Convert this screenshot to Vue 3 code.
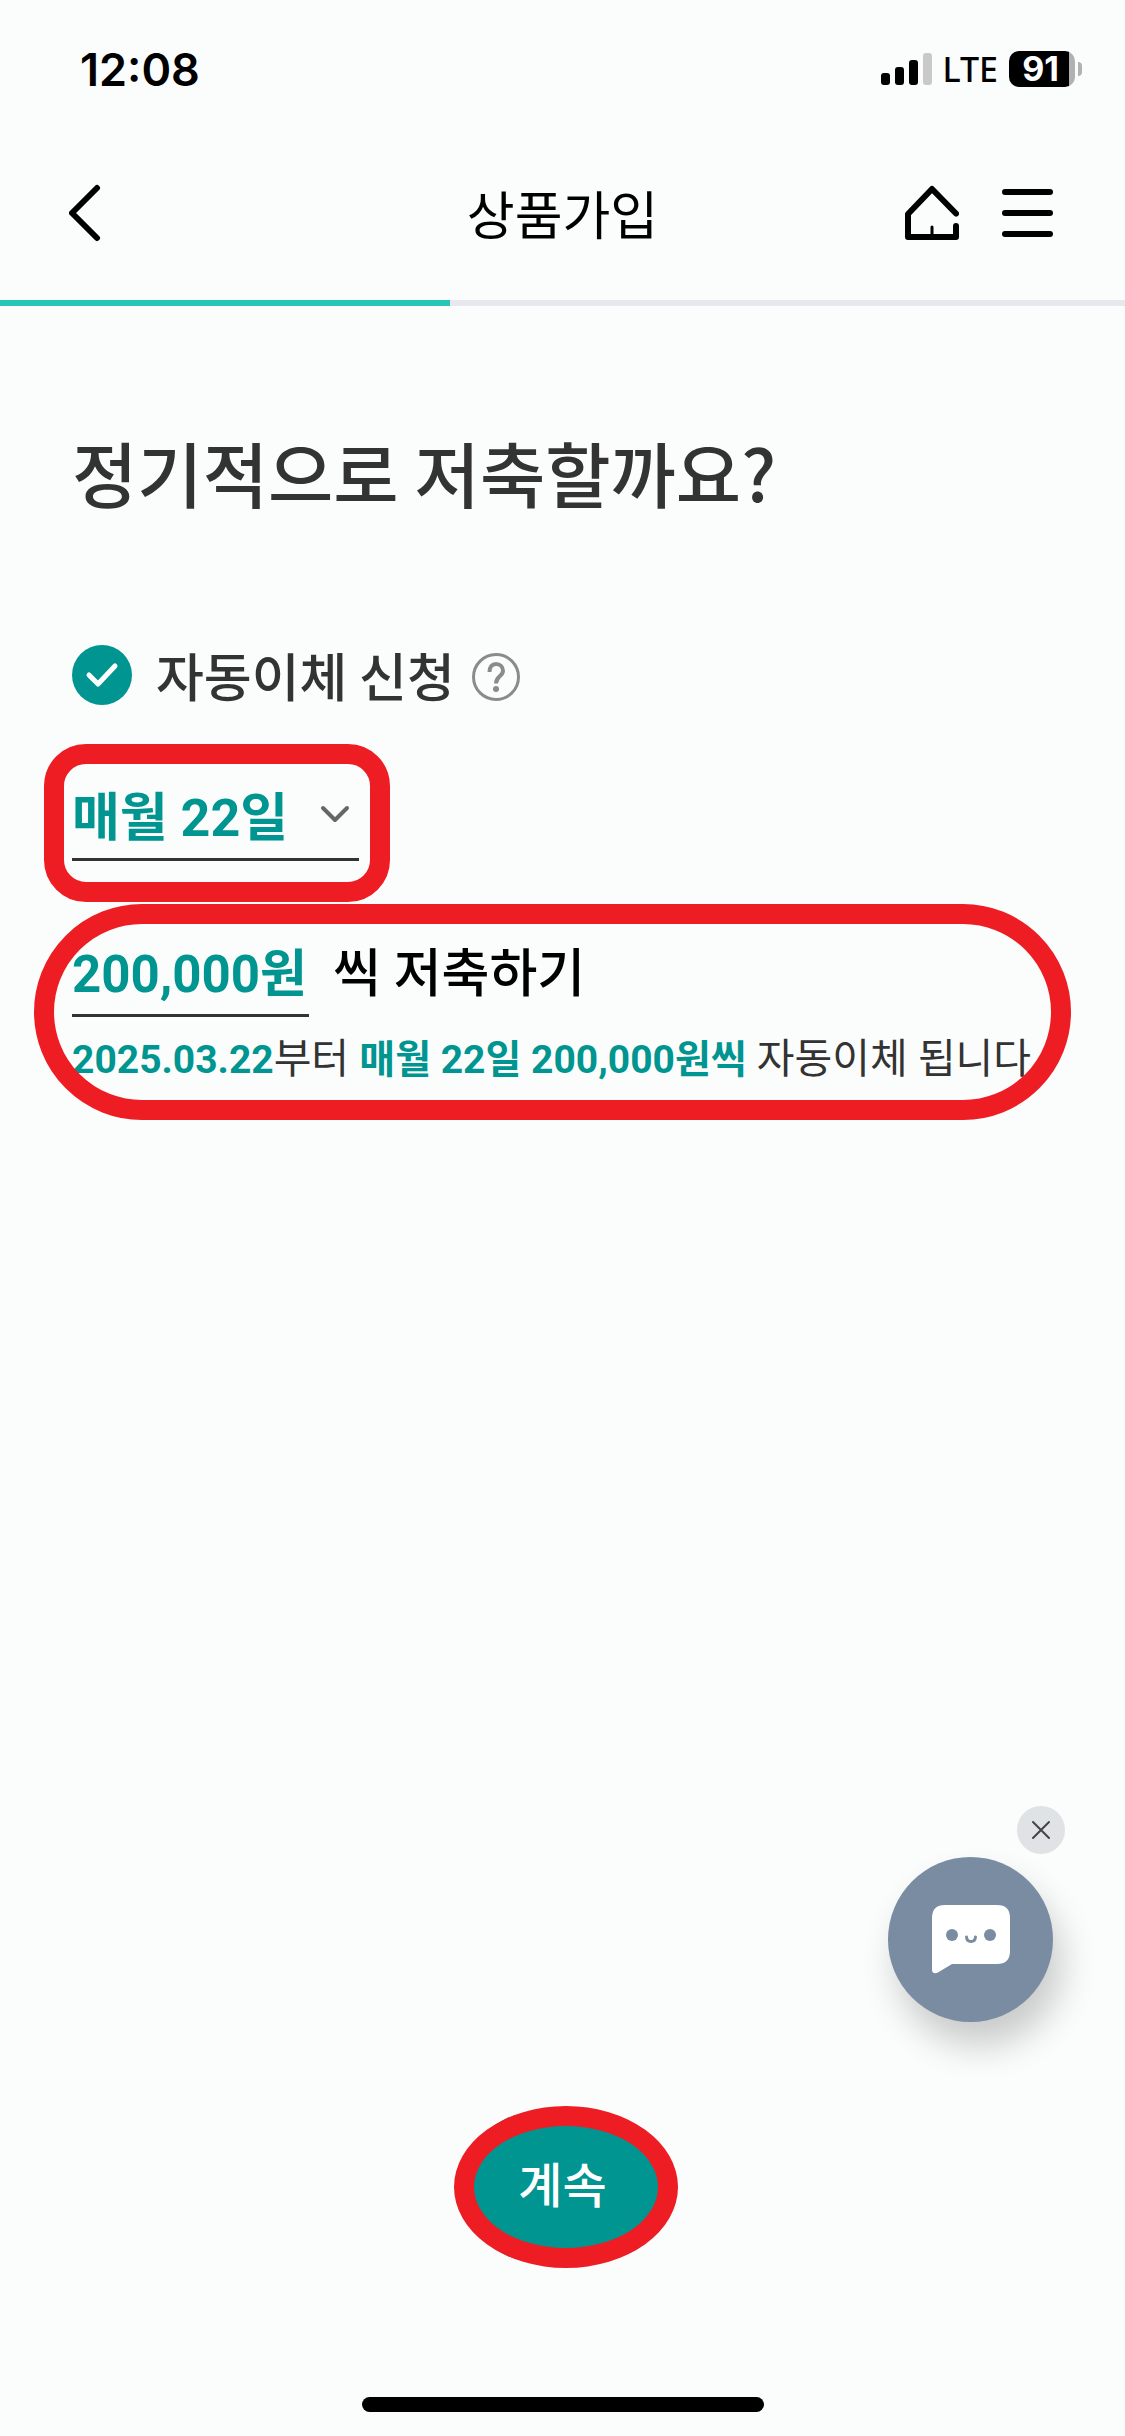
<script setup>
import { ref } from 'vue'

const autoTransfer = ref(true)
const day = ref('매월 22일')
const amount = ref('200,000원')
const chatOpen = ref(true)
const progress = 40
</script>

<template>
  <div class="screen">
    <div class="status">
      <span class="clock">12:08</span>
      <div class="indicators">
        <svg class="signal" width="51" height="32" viewBox="0 0 51 32" aria-hidden="true">
          <rect x="0" y="20" width="9" height="12" rx="3" />
          <rect x="14" y="14" width="9" height="18" rx="3" />
          <rect x="28" y="7" width="9" height="25" rx="3" />
          <rect x="42" y="0" width="9" height="32" rx="3" fill="#c9c9c9" />
        </svg>
        <span class="network">LTE</span>
        <div class="battery"><span class="level">91</span></div>
        <i class="battery-tip"></i>
      </div>
    </div>

    <header class="topbar">
      <button class="icon-btn back" aria-label="뒤로">
        <svg width="33" height="60" viewBox="3 0 33 60" fill="none" stroke="#000" stroke-width="6" stroke-linecap="round" stroke-linejoin="round">
          <path d="M31 5 6 30 31 55" />
        </svg>
      </button>
      <h2 class="page-name">상품가입</h2>
      <nav class="actions">
        <button class="icon-btn" aria-label="홈">
          <svg width="54" height="60" viewBox="0 0 54 60" fill="none" stroke="#000" stroke-width="6" stroke-linecap="round" stroke-linejoin="round">
            <path d="M51 30.500 27 6 3 31V54H51V43" />
            <path d="M27 44V52" stroke-width="3" />
          </svg>
        </button>
        <button class="icon-btn" aria-label="메뉴">
          <svg width="54" height="60" viewBox="0 0 54 60" fill="none" stroke="#000" stroke-width="6" stroke-linecap="round">
            <path d="M3 9H48M3 30H48M3 51H48" />
          </svg>
        </button>
      </nav>
    </header>
    <div class="progress"><div class="progress-fill" :style="{ width: progress + '%' }"></div></div>

    <main class="content">
      <h1>정기적으로 저축할까요?</h1>

      <div class="consent">
        <label class="check">
          <span class="tick">
            <input v-model="autoTransfer" type="checkbox" />
            <svg width="60" height="60" viewBox="0 0 60 60" fill="none" stroke="#fff" stroke-width="5" stroke-linecap="round" stroke-linejoin="round" aria-hidden="true">
              <path d="M17 30 26 39 43 21" />
            </svg>
          </span>
          자동이체 신청
        </label>
        <button class="help" aria-label="도움말">
          <svg width="48" height="48" viewBox="0 0 48 48" fill="none" stroke="#8b8b8b" stroke-width="3">
            <circle cx="24" cy="24" r="22.500" />
            <path d="M17.500 19C17.500 14 20 11 24 11S31 14 31 18C31 23 24 23.500 24 30.500" stroke-width="4" />
            <circle cx="24" cy="36" r="3" fill="#8b8b8b" stroke="none" />
          </svg>
        </button>
      </div>

      <div class="marked date">
        <label class="select">
          <select v-model="day" aria-label="이체일">
            <option>매월 22일</option>
          </select>
          <svg width="30" height="20" viewBox="0 0 30 20" fill="none" stroke="#666" stroke-width="4" stroke-linecap="round" stroke-linejoin="round" aria-hidden="true">
            <path d="M3 3 15 15 27 3" />
          </svg>
        </label>
      </div>

      <div class="marked plan">
        <div class="amount-row">
          <input id="amount" v-model="amount" class="amount" type="text" />
          <label for="amount">씩 저축하기</label>
        </div>
        <p class="summary"><b>2025.03.22</b>부터 <b>매월 22일 200,000원씩</b> 자동이체 됩니다</p>
      </div>
    </main>

    <div v-if="chatOpen" class="chat">
      <button class="chat-close" aria-label="닫기" @click="chatOpen = false">
        <svg width="20" height="20" viewBox="0 0 20 20" stroke="#444" stroke-width="2" stroke-linecap="round">
          <path d="M2 2 18 18M18 2 2 18" />
        </svg>
      </button>
      <button class="chat-open" aria-label="챗봇 상담">
        <svg width="78" height="70" viewBox="0 0 78 70">
          <path fill="#fff" d="M13 0H65Q78 0 78 13V46Q78 59 65 59H20L5.500 67.800Q0 69.500 0 64.500V13Q0 0 13 0Z" />
          <circle cx="20" cy="30" r="6" fill="#798ca1" />
          <circle cx="58" cy="30" r="6" fill="#798ca1" />
          <path d="M34.500 32C35 38 43 38 43.500 32" fill="none" stroke="#798ca1" stroke-width="3" stroke-linecap="round" />
        </svg>
      </button>
    </div>

    <footer class="footer">
      <button class="next">계속</button>
    </footer>
    <div class="home-indicator"></div>
  </div>
</template>

<style>
body {
  margin: 0;
  background: #fbfdfc;
}
</style>

<style scoped>
.screen {
  display: flex;
  flex-direction: column;
  min-height: 100vh;
  box-sizing: border-box;
  padding-bottom: 24px;
  background: #fbfdfc;
  color: #333;
  font-family: Roboto, "Noto Sans CJK KR", sans-serif;
}
button {
  display: flex;
  align-items: center;
  justify-content: center;
  padding: 0;
  border: 0;
  background: none;
  font: inherit;
  cursor: pointer;
}
svg {
  display: block;
}

.status {
  display: flex;
  align-items: center;
  justify-content: space-between;
  height: 138px;
  padding: 0 43px 0 80px;
  color: #000;
  font-family: Inter, "Liberation Sans", sans-serif;
}
.clock {
  font-size: 45px;
  font-weight: 600;
}
.indicators {
  display: flex;
  align-items: center;
}
.network {
  margin: 0 11px 0 10px;
  font-family: "Noto Sans", sans-serif;
  font-size: 34px;
  font-weight: 500;
  line-height: 36px;
}
.battery {
  display: flex;
  align-items: center;
  width: 66px;
  height: 36px;
  border-radius: 10px;
  background: linear-gradient(to right, #000 60px, #b1b1b1 60px);
}
.level {
  width: 63px;
  color: #fff;
  font-size: 34px;
  font-weight: 700;
  line-height: 36px;
  text-align: center;
}
.battery-tip {
  width: 4px;
  height: 14px;
  margin-left: 3px;
  border-radius: 0 8px 8px 0;
  background: #b1b1b1;
}

.topbar {
  display: grid;
  grid-template-columns: 1fr auto 1fr;
  align-items: center;
  height: 162px;
  box-sizing: border-box;
  padding: 0 69px 12px;
}
.back {
  justify-self: start;
}
.page-name {
  margin: 0;
  color: #000;
  font-family: "Noto Sans CJK KR", sans-serif;
  font-size: 52px;
  font-weight: 400;
  line-height: 72px;
}
.actions {
  display: flex;
  justify-content: flex-end;
  gap: 43px;
}
.progress {
  height: 6px;
  background: #e7e7ed;
}
.progress-fill {
  height: 100%;
  background: #26c6b7;
}

.content {
  padding: 115px 54px 0 72px;
}
h1 {
  margin: 0;
  font-family: "Noto Sans CJK KR", sans-serif;
  font-size: 71px;
  font-weight: 500;
  line-height: 100px;
}
.consent {
  display: flex;
  align-items: center;
  margin-top: 118px;
}
.check {
  display: flex;
  align-items: center;
  gap: 24px;
  font-family: "Noto Sans CJK KR", sans-serif;
  font-size: 52px;
  font-weight: 500;
  line-height: 72px;
}
.tick {
  display: grid;
}
.tick > * {
  grid-area: 1 / 1;
}
.tick input {
  width: 60px;
  height: 60px;
  margin: 0;
  appearance: none;
  border-radius: 50%;
  background: #c9cdd2;
}
.tick input:checked {
  background: #009590;
}
.tick svg {
  pointer-events: none;
}
.help {
  margin: 4px 0 0 17px;
}

/* red highlight rings around the fields */
.marked {
  position: relative;
}
.marked::after {
  content: "";
  position: absolute;
  border: 20px solid #ee1d24;
  pointer-events: none;
}
.date {
  width: 287px;
  margin-top: 66px;
}
.date::after {
  inset: -33px -31px -41px -28px;
  border-radius: 42px;
}
.select {
  display: grid;
  align-items: center;
}
.select > * {
  grid-area: 1 / 1;
}
.select svg {
  justify-self: end;
  margin: 0 9px 8px 0;
  pointer-events: none;
}
select,
.amount {
  box-sizing: border-box;
  width: 100%;
  height: 84px;
  margin: 0;
  padding: 2px 0 0;
  border: 0;
  border-bottom: 3px solid #333;
  border-radius: 0;
  outline: 0;
  appearance: none;
  background: none;
  color: #009590;
  font-family: inherit;
  font-size: 52px;
  font-weight: 700;
}
.plan {
  margin-top: 72px;
}
.plan::after {
  inset: -29px 0 -20px -38px;
  border-radius: 108px;
}
.amount-row {
  display: flex;
  align-items: center;
  gap: 24px;
  color: #000;
  font-size: 52px;
  font-weight: 500;
  line-height: 72px;
}
.amount {
  width: 237px;
  padding: 0 0 8px;
  font-size: 51px;
}
.summary {
  margin: 12px 0 0;
  padding-bottom: 10px;
  font-size: 41px;
  line-height: 60px;
  white-space: nowrap;
}
.summary b {
  color: #009590;
  font-size: 39px;
  font-weight: 700;
}

.chat {
  display: flex;
  flex-direction: column;
  align-items: flex-end;
  gap: 3px;
  margin-top: auto;
  padding-right: 60px;
}
.chat-close {
  width: 48px;
  height: 48px;
  border-radius: 50%;
  background: #dfe3e6;
}
.chat-open {
  width: 165px;
  height: 165px;
  margin-right: 12px;
  border-radius: 50%;
  background: #798ca1;
  box-shadow: 9px 24px 36px rgba(0, 0, 0, 0.2);
}

.footer {
  display: flex;
  justify-content: center;
  margin-top: 90px;
}
.next {
  position: relative;
  width: 202px;
  height: 150px;
  padding-bottom: 10px;
  border-radius: 75px;
  background: #009590;
  color: #fff;
  font-size: 48px;
  font-weight: 500;
}
.next::after {
  content: "";
  position: absolute;
  inset: -6px -14px -6px -8px;
  border: 20px solid #ee1d24;
  border-radius: 50%;
}
.home-indicator {
  align-self: center;
  width: 402px;
  height: 15px;
  margin-top: 135px;
  border-radius: 8px;
  background: #000;
}
</style>
